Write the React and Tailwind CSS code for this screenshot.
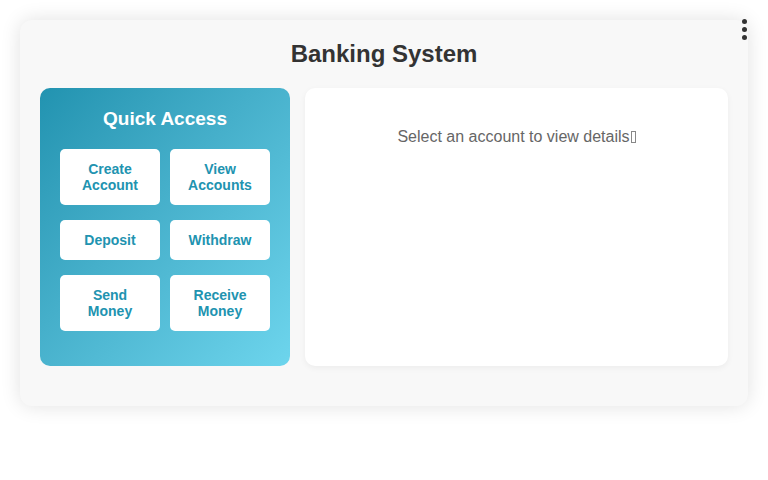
export default function App() {
  const btn =
    "w-full rounded-[5px] bg-white px-2 py-3 text-center text-[14px] font-bold leading-4 text-[#2193b0]";
  return (
    <div className="min-h-[480px] w-[768px] bg-white p-5" style={{ fontFamily: '"Liberation Sans", Arial, sans-serif' }}>
      <div className="relative rounded-xl bg-[#f8f8f8] px-5 pt-[19px] pb-10 shadow-[0_0_20px_rgba(0,0,0,0.12)]">
        <div className="absolute right-[1px] top-[-1px] flex flex-col items-center gap-[3px]">
          <span className="h-[5px] w-[5px] rounded-full bg-[#333]"></span>
          <span className="h-[5px] w-[5px] rounded-full bg-[#333]"></span>
          <span className="h-[5px] w-[5px] rounded-full bg-[#333]"></span>
        </div>
        <h1 className="text-center text-[24px] font-bold leading-[30px] text-[#333]">Banking System</h1>
        <div className="mt-[19px] flex gap-[15px]">
          <div className="h-[278px] w-[250px] rounded-[10px] bg-gradient-to-br from-[#2193b0] to-[#6dd5ed] px-5 pt-[19px]">
            <h2 className="text-center text-[19px] font-bold leading-6 text-white">Quick Access</h2>
            <div className="mt-[18px] grid grid-cols-2 gap-x-[10px] gap-y-[15px]">
              <button className={btn}>Create<br />Account</button>
              <button className={btn}>View<br />Accounts</button>
              <button className={btn}>Deposit</button>
              <button className={btn}>Withdraw</button>
              <button className={btn}>Send<br />Money</button>
              <button className={btn}>Receive<br />Money</button>
            </div>
          </div>
          <div className="h-[278px] flex-1 rounded-[10px] bg-white pt-[40px] text-center shadow-[0_2px_6px_rgba(0,0,0,0.05)]">
            <p className="text-[16px] leading-[18px] text-[#666]">
              Select an account to view details
              <span className="ml-[1px] inline-block h-[12px] w-[5px] border border-[#888] align-[-1px]"></span>
            </p>
          </div>
        </div>
      </div>
    </div>
  );
}
